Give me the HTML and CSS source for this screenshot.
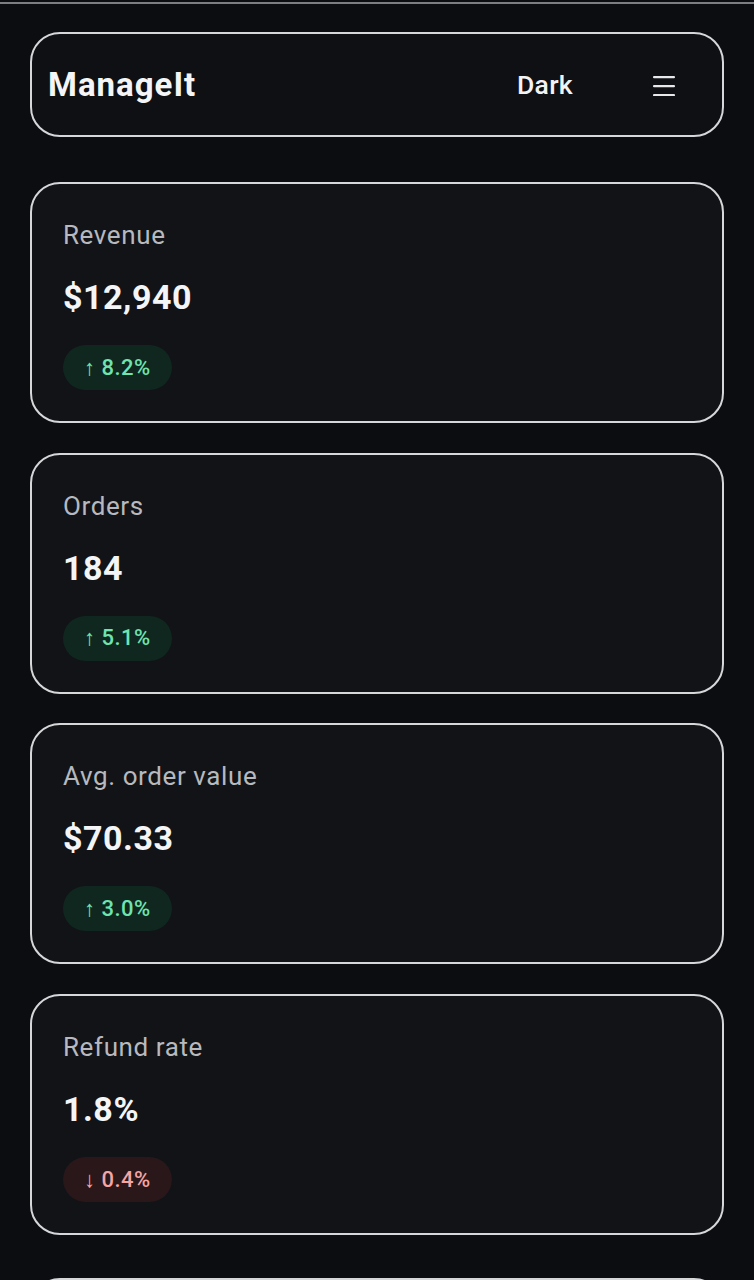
FILE: index.html
```html
<!DOCTYPE html>
<html lang="en">
<head>
<meta charset="utf-8">
<title>ManageIt</title>
<link rel="stylesheet" href="styles.css">
</head>
<body>
<div class="topline"></div>
<main class="page">
  <header class="appbar">
    <div class="brand">ManageIt</div>
    <div class="actions">
      <button class="theme-btn">Dark</button>
      <button class="menu-btn" aria-label="Menu">
        <svg width="22" height="20" viewBox="0 0 22 20"><g fill="#e8e8ea"><rect x="0" y="0" width="22" height="2.2" rx="1"/><rect x="0" y="9" width="22" height="2.2" rx="1"/><rect x="0" y="18" width="22" height="2.2" rx="1"/></g></svg>
      </button>
    </div>
  </header>

  <section class="stats">
    <article class="card">
      <div class="label">Revenue</div>
      <div class="value">$12,940</div>
      <span class="pill up">↑ 8.2%</span>
    </article>
    <article class="card">
      <div class="label">Orders</div>
      <div class="value">184</div>
      <span class="pill up">↑ 5.1%</span>
    </article>
    <article class="card">
      <div class="label">Avg. order value</div>
      <div class="value">$70.33</div>
      <span class="pill up">↑ 3.0%</span>
    </article>
    <article class="card">
      <div class="label">Refund rate</div>
      <div class="value">1.8%</div>
      <span class="pill down">↓ 0.4%</span>
    </article>
  </section>
  <section class="card next"></section>
</main>
</body>
</html>
```

FILE: styles.css
```css
* { box-sizing: border-box; }
html, body {
  margin: 0;
  background: #0b0d10;
  font-family: Roboto, "Noto Sans", "Liberation Sans", sans-serif;
  color: #f2f3f5;
  overflow: hidden;
}
.topline {
  height: 2px;
  margin-top: 2px;
  background: #7c7e82;
}
.page {
  padding: 28px 30px 0;
  display: flex;
  flex-direction: column;
}
.appbar {
  height: 105px;
  border: 2px solid #d6d7d9;
  border-radius: 30px;
  background: #0e1014;
  display: flex;
  align-items: center;
  justify-content: space-between;
  padding: 0 47px 0 16px;
}
.brand {
  font-size: 33px;
  font-weight: 700;
  letter-spacing: 1px;
  color: #f4f5f7;
}
.actions {
  display: flex;
  align-items: center;
  gap: 80px;
}
.theme-btn {
  background: none;
  border: none;
  padding: 0;
  font-family: inherit;
  font-size: 26.5px;
  font-weight: 500;
  letter-spacing: 0.3px;
  color: #f2f3f5;
}
.menu-btn {
  background: none;
  border: none;
  padding: 0;
  display: flex;
  margin-top: 2px;
}
.stats {
  margin-top: 45px;
  display: flex;
  flex-direction: column;
  gap: 29.7px;
}
.card {
  height: 241px;
  border: 2px solid #d6d7d9;
  border-radius: 30px;
  background: #111317;
  padding: 37px 31px 0;
  display: flex;
  flex-direction: column;
  align-items: flex-start;
}
.label {
  font-size: 26px;
  line-height: 29px;
  letter-spacing: 0.6px;
  color: #b7b9be;
}
.value {
  margin-top: 28px;
  font-size: 34px;
  line-height: 38px;
  font-weight: 700;
  letter-spacing: 0.5px;
  color: #f4f5f7;
}
.pill {
  margin-top: 29px;
  height: 45px;
  padding: 0 21px;
  border-radius: 23px;
  display: inline-flex;
  align-items: center;
  font-size: 22px;
  font-weight: 500;
  letter-spacing: 0.5px;
}
.pill.up {
  background: #10271f;
  color: #6ee4b0;
}
.pill.down {
  background: #291719;
  color: #f5a5a5;
}
.next {
  margin-top: 43px;
}
```
